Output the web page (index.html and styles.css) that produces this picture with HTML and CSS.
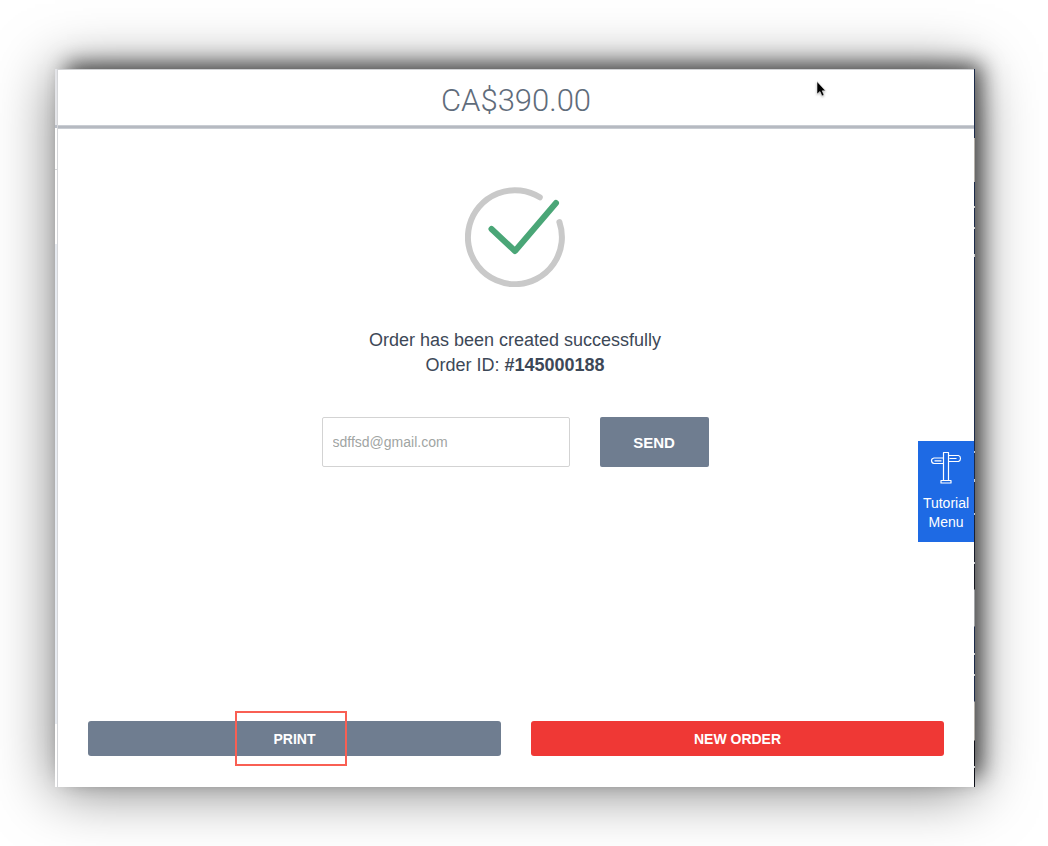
FILE: index.html
```html
<!DOCTYPE html>
<html lang="en">
<head>
<meta charset="utf-8">
<title>Order created</title>
<link rel="stylesheet" href="styles.css">
</head>
<body>
<div class="window">
  <div class="edge-left"></div>
  <main class="panel">
    <header class="header"><h1 class="total">CA$390.00</h1></header>
    <section class="content">
      <svg class="success-icon" viewBox="0 0 100 100" fill="none" stroke-width="6" stroke-linecap="round" stroke-linejoin="round" aria-hidden="true">
        <path stroke="#c9c9c9" d="M74.8 10.300A47 47 0 1 0 94.400 35"/>
        <path stroke="#4aa677" d="M26.500 42L50 64L91 16"/>
      </svg>
      <p class="message">Order has been created successfully<br>Order ID: <strong>#145000188</strong></p>
      <form class="receipt">
        <input class="email" type="email" aria-label="Email address" placeholder="sdffsd@gmail.com">
        <button class="button send" type="button">SEND</button>
      </form>
    </section>
    <footer class="actions">
      <button class="button action" type="button">PRINT<span class="highlight"></span></button>
      <button class="button action new-order" type="button">NEW ORDER</button>
    </footer>
    <button class="tutorial" type="button">
      <svg class="signpost" viewBox="0 0 32 34" fill="none" stroke="#fff" stroke-width="1.200" stroke-linejoin="round" aria-hidden="true">
        <path d="M13.500 29.500V1.500H18.500V29.500M11 29.500H21V32H11ZM13.500 7H4Q1.500 7.500 1.500 9.500Q1.500 12 4 12.500H13.500M18.500 4.500H28.500Q30.500 5 30.500 7.500Q30.500 9.500 28.500 10.500H18.500M4.500 9.800H11.500M19.500 7.500H26.500"/>
      </svg>
      <span>Tutorial Menu</span>
    </button>
    <svg class="cursor" viewBox="0 0 12 18" aria-hidden="true">
      <path d="M1 .5V13L4 10.500L6 15L8 14L6.200 9.800H9.500Z" fill="#000" stroke="#fff" stroke-width=".5"/>
    </svg>
  </main>
  <div class="edge-right"></div>
</div>
</body>
</html>
```
FILE: styles.css
```css
* { box-sizing: border-box; }

body {
  margin: 0;
  min-height: 100vh;
  display: flex;
  padding: 69px 73px 59px 55px;
  background: #fff;
  color: #3d4857;
  font-family: "Liberation Sans", Arial, sans-serif;
  overflow-x: hidden;
}

.window {
  flex: 1;
  display: flex;
  box-shadow:
    9px -8px 20px -3px rgba(0, 0, 0, .64),
    0 3px 56px rgba(0, 0, 0, .5);
}

.edge-left {
  width: 3px;
  border-right: 1px solid #d5d6d9;
  background: linear-gradient(#e4e5e9 56px, #b9bec7 56px 59px, #fff 59px 100px, #d5d6d9 100px 101px, #fff 101px 175px, #e7ebf1 175px 655px, #fff 655px);
}

.edge-right {
  width: 1px;
  background:
    linear-gradient(transparent 137px, #c8cbd0 137px 139px, transparent 139px 158px, #c8cbd0 158px 160px, transparent 160px 185px, #c8cbd0 185px 188px, transparent 188px 382px, #c8cbd0 382px 384px, transparent 384px 410px, #c8cbd0 410px 413px, transparent 413px 444px, #c8cbd0 444px 446px, transparent 446px 493px, #c8cbd0 493px 495px, transparent 495px 584px, #c8cbd0 584px 586px, transparent 586px 605px, #c8cbd0 605px 607px, transparent 607px 697px, #c8cbd0 697px 699px, transparent 699px),
    linear-gradient(#1c2b4a 69px, #b5b1ab 69px 113px, #1c2b4a 113px 400px, #14161f 520px, #a3a5a8 521px 557px, #1c2b4a 558px 632px, #b5b1ab 633px 671px, #0d0f18 672px);
}

.panel {
  position: relative;
  flex: 1;
  display: flex;
  flex-direction: column;
  background: #fff;
}

.header {
  padding: 13px 0 6px;
  border-top: 1px solid #d3d4d6;
  border-bottom: 4px double #c9cdd3;
  background: linear-gradient(#fff, #fff) padding-box, #b6bac1 border-box;
}

.total {
  margin: 0;
  text-align: center;
  color: #5f6c7b;
  font: 300 31px/36px Roboto, "Liberation Sans", sans-serif;
}

.content {
  flex: 1;
  display: flex;
  flex-direction: column;
  align-items: center;
  padding: 58px 32px 32px 30px;
}

.success-icon { width: 100px; height: 100px; }

.message {
  margin: 41px 0 39px;
  font-size: 18px;
  line-height: 25px;
  text-align: center;
}

.receipt { display: flex; gap: 30px; }

.email {
  width: 248px;
  height: 50px;
  padding: 0 10px;
  border: 1px solid #d3d3d3;
  border-radius: 2px;
  background: #fff;
  font: 14px "Liberation Sans", Arial, sans-serif;
}

.email::placeholder { color: #9fa5a3; opacity: 1; }

.button {
  padding: 0;
  border: 0;
  border-radius: 3px;
  background: #6f7d90;
  color: #fff;
  font: bold 14px "Liberation Sans", Arial, sans-serif;
}

.send { width: 109px; border-radius: 2px; font-size: 15px; }

.actions {
  display: flex;
  gap: 30px;
  padding: 0 30px 31px;
}

.action { position: relative; flex: 1; height: 35px; }

.new-order { background: #ef3835; }

.highlight {
  position: absolute;
  inset: -10px 154px -10px 147px;
  border: 2px solid #f95f53;
}

.tutorial {
  position: absolute;
  top: 372px;
  right: 0;
  width: 56px;
  height: 101px;
  padding: 0 4px;
  border: 0;
  display: flex;
  flex-direction: column;
  align-items: center;
  justify-content: center;
  gap: 9px;
  background: #1e6ae4;
  color: #fff;
  font: 14px/19px "Liberation Sans", Arial, sans-serif;
}

.signpost { width: 32px; height: 34px; }

.cursor {
  position: absolute;
  top: 12px;
  right: 146px;
  width: 12px;
  height: 18px;
  filter: drop-shadow(0 1px 1px rgba(0, 0, 0, .3));
}
```
